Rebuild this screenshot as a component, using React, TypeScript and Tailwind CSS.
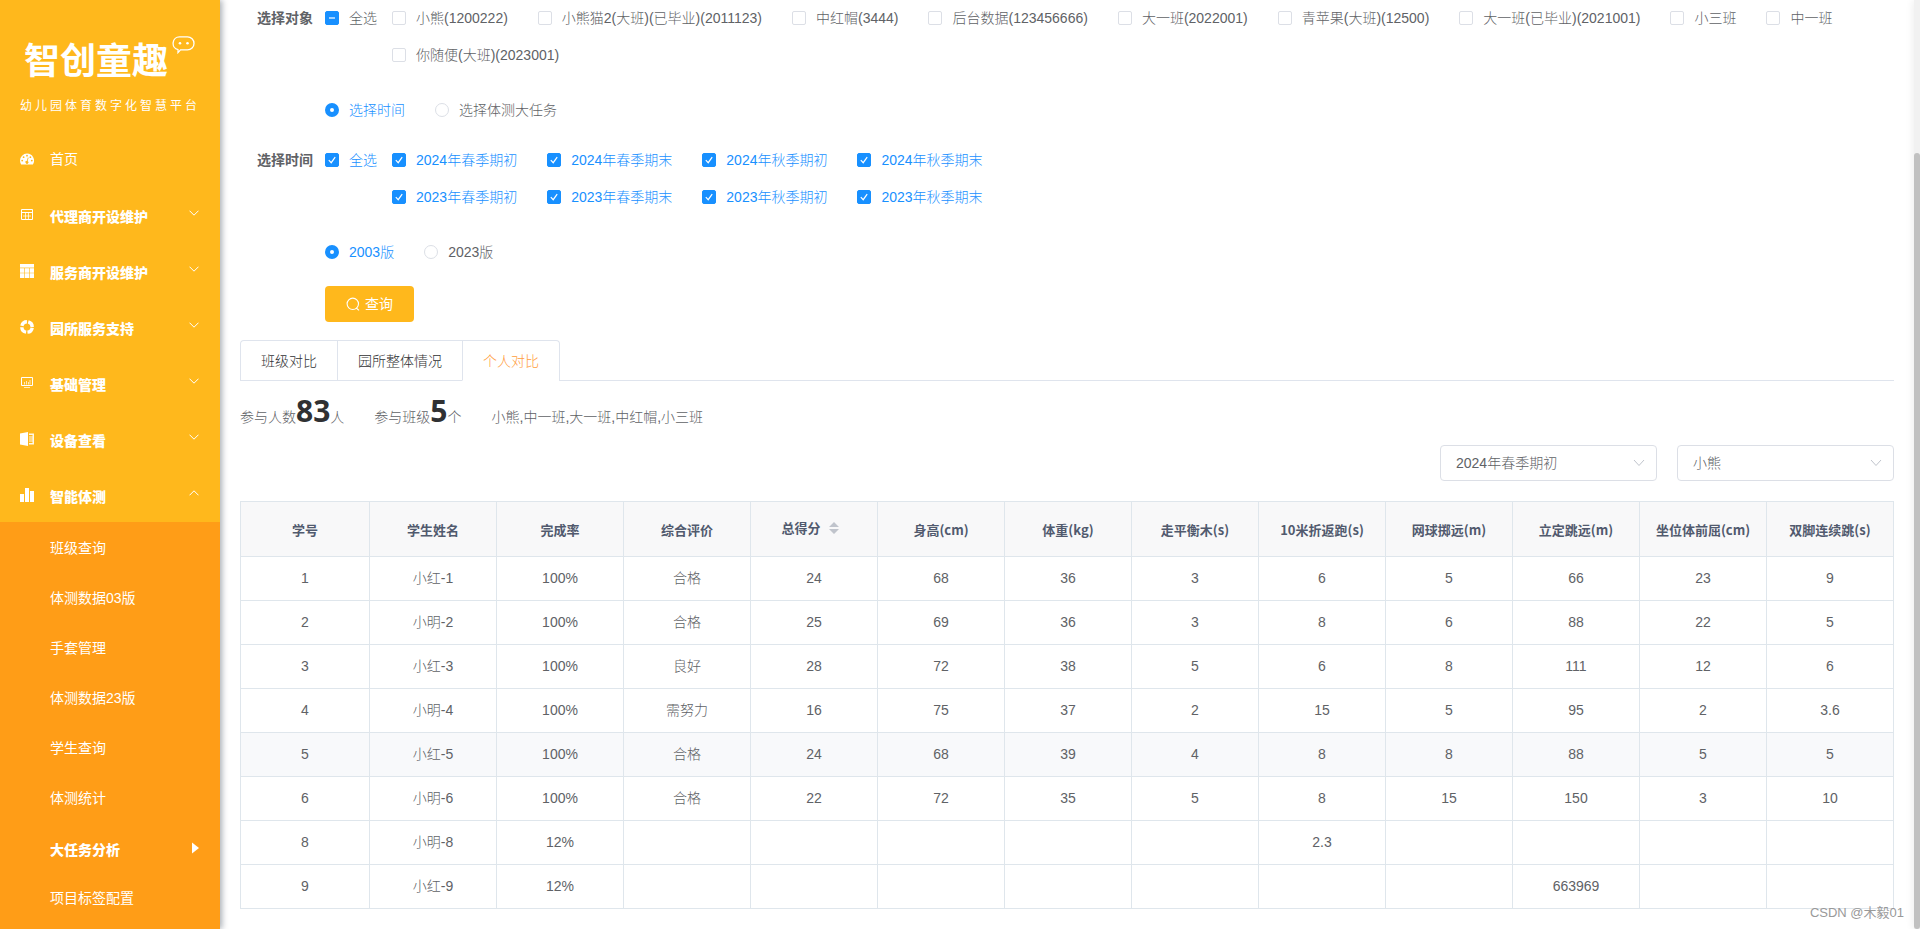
import { useState, type ReactNode } from 'react';
import clsx from 'clsx';

const CLASSES = [
  '小熊(1200222)',
  '小熊猫2(大班)(已毕业)(2011123)',
  '中红帽(3444)',
  '后台数据(123456666)',
  '大一班(2022001)',
  '青苹果(大班)(12500)',
  '大一班(已毕业)(2021001)',
  '小三班',
  '中一班',
  '你随便(大班)(2023001)',
];

const TERMS = [
  '2024年春季期初',
  '2024年春季期末',
  '2024年秋季期初',
  '2024年秋季期末',
  '2023年春季期初',
  '2023年春季期末',
  '2023年秋季期初',
  '2023年秋季期末',
];

const TABS = ['班级对比', '园所整体情况', '个人对比'];

const COLUMNS = [
  '学号',
  '学生姓名',
  '完成率',
  '综合评价',
  '总得分',
  '身高(cm)',
  '体重(kg)',
  '走平衡木(s)',
  '10米折返跑(s)',
  '网球掷远(m)',
  '立定跳远(m)',
  '坐位体前屈(cm)',
  '双脚连续跳(s)',
];

const ROWS = [
  ['1', '小红-1', '100%', '合格', '24', '68', '36', '3', '6', '5', '66', '23', '9'],
  ['2', '小明-2', '100%', '合格', '25', '69', '36', '3', '8', '6', '88', '22', '5'],
  ['3', '小红-3', '100%', '良好', '28', '72', '38', '5', '6', '8', '111', '12', '6'],
  ['4', '小明-4', '100%', '需努力', '16', '75', '37', '2', '15', '5', '95', '2', '3.6'],
  ['5', '小红-5', '100%', '合格', '24', '68', '39', '4', '8', '8', '88', '5', '5'],
  ['6', '小明-6', '100%', '合格', '22', '72', '35', '5', '8', '15', '150', '3', '10'],
  ['8', '小明-8', '12%', '', '', '', '', '', '2.3', '', '', '', ''],
  ['9', '小红-9', '12%', '', '', '', '', '', '', '', '663969', '', ''],
];

const SUB_MENU = ['班级查询', '体测数据03版', '手套管理', '体测数据23版', '学生查询', '体测统计'];

function MenuIcon({ children }: { children: ReactNode }) {
  return (
    <svg viewBox="0 0 14 14" className="mr-4 size-3.5 shrink-0" fill="currentColor">
      {children}
    </svg>
  );
}

const ICONS: Record<string, ReactNode> = {
  dashboard: (
    <>
      <path d="M7 1.6a7 7 0 0 0-7 7c0 1.4.4 2.7 1.1 3.8.1.2.3.2.5.2h10.8c.2 0 .4 0 .5-.2A7 7 0 0 0 7 1.6z" />
      <g fill="#ffb81c">
        <circle cx="2.2" cy="8.6" r="0.9" />
        <circle cx="3.6" cy="5.2" r="0.9" />
        <circle cx="7" cy="3.7" r="0.9" />
        <circle cx="10.4" cy="5.2" r="0.9" />
        <circle cx="11.8" cy="8.6" r="0.9" />
        <path d="M8.6 5.7l-.9 3.3a1.5 1.5 0 1 1-.8-.2l.9-3.3z" />
      </g>
    </>
  ),
  table: (
    <g fill="none" stroke="currentColor">
      <path d="M1.5 1.5h11v10h-11z" />
      <path d="M1.5 4.5h11" />
      <path d="M3 8h8M5.5 5v6M8.5 5v6" strokeOpacity="0.75" />
    </g>
  ),
  grid: (
    <>
      <path d="M0 0h14v3.6H0z" />
      <path d="M0 4.2h4.4v4.5H0zM5 4.2h4v4.5H5zM9.6 4.2H14v4.5H9.6zM0 9.3h4.4V14H0zM5 9.3h4V14H5zM9.6 9.3H14V14H9.6z" />
    </>
  ),
  support: (
    <circle cx="7" cy="7" r="5.2" fill="none" stroke="currentColor" strokeWidth="3.4" strokeDasharray="6.77 1.4" strokeDashoffset="-0.7" />
  ),
  monitor: (
    <g fill="none" stroke="currentColor">
      <path d="M1.5 1.5h11v8h-11z" />
      <path d="M4.5 6v2.5M6.5 5v3.5M8.5 6v2.5M10 4v4.5M4 11.5h6" strokeOpacity="0.7" />
    </g>
  ),
  book: (
    <>
      <path d="M0 1.5 8 0v14l-8-1.5z" />
      <path d="M9 1.5h5v11H9V11h3.5V9.5H9v-1h3.5v-1H9v-1h3.5v-1H9v-1h3.5V3H9z" opacity="0.9" />
    </>
  ),
  chart: <path d="M0 6h4v8H0zM5 0h4v14H5zM10 3h4v11h-4z" />,
};

const MENU = [
  { label: '代理商开设维护', icon: 'table' },
  { label: '服务商开设维护', icon: 'grid' },
  { label: '园所服务支持', icon: 'support' },
  { label: '基础管理', icon: 'monitor' },
  { label: '设备查看', icon: 'book' },
  { label: '智能体测', icon: 'chart', open: true },
];

function Chevron({ up }: { up?: boolean }) {
  return (
    <svg viewBox="0 0 10 6" className="mb-1 h-1.5 w-2.5" fill="none" stroke="currentColor">
      <path d={up ? 'M.5 5.3 5 .8l4.5 4.5' : 'M.5.7 5 5.2 9.5.7'} />
    </svg>
  );
}

function Sidebar() {
  return (
    <aside className="z-10 w-[220px] shrink-0 bg-[#ff9d17] text-sm text-white shadow-[2px_0_6px_rgba(0,21,41,0.35)]">
      <div className="bg-[#ffb81c]">
        <div className="h-[130px] px-5 pt-9">
          <div className="flex items-start gap-1 pl-1">
            <h1 className="pt-1 text-4xl leading-[44px] font-bold">智创童趣</h1>
            <svg viewBox="0 0 23 18" className="h-[18px] w-[23px] shrink-0" fill="none" stroke="currentColor" strokeWidth="1.3">
              <path d="M7.5.9h8a6.5 6.5 0 0 1 0 13h-7L6 16.6v-2.9A6.5 6.5 0 0 1 7.500.9z" />
              <circle cx="8" cy="7.3" r="1.3" fill="currentColor" stroke="none" />
              <circle cx="15.5" cy="7.3" r="1.3" fill="currentColor" stroke="none" />
            </svg>
          </div>
          <p className="mt-3 text-xs leading-5 tracking-[3px] whitespace-nowrap">幼儿园体育数字化智慧平台</p>
        </div>
        <nav>
          <a href="#home" className="flex h-14 items-center px-5 pt-0.5">
            <MenuIcon>{ICONS.dashboard}</MenuIcon>
            首页
          </a>
          {MENU.map((item) => (
            <button key={item.label} type="button" className="flex h-14 w-full items-center pt-0.5 pr-[21px] pl-5 font-black">
              <MenuIcon>{ICONS[item.icon]}</MenuIcon>
              <span className="flex-1 pt-1 text-left">{item.label}</span>
              <Chevron up={item.open} />
            </button>
          ))}
        </nav>
      </div>
      <nav>
        {SUB_MENU.map((label) => (
          <a key={label} href="#sub" className="flex h-[50px] items-center pt-0.5 pl-[50px]">
            {label}
          </a>
        ))}
        <button type="button" className="flex h-[50px] w-full items-center justify-between pt-0.5 pr-[21px] pl-[50px] font-black">
          <span className="pt-1">大任务分析</span>
          <svg viewBox="0 0 8 12" className="h-3 w-2" fill="currentColor">
            <path d="M1 .5v11L8 6z" />
          </svg>
        </button>
        <a href="#tags" className="flex h-[50px] items-center pt-0.5 pl-[50px]">
          项目标签配置
        </a>
      </nav>
    </aside>
  );
}

interface CheckProps {
  label: string;
  defaultChecked?: boolean;
  partial?: boolean;
}

function Check({ label, defaultChecked = false, partial = false }: CheckProps) {
  const [checked, setChecked] = useState(defaultChecked);
  const filled = checked || partial;

  return (
    <label className={clsx('flex h-9 items-center gap-2.5', checked ? 'text-[#1890ff]' : 'text-[#606266]')}>
      <span className="relative flex size-3.5">
        <input
          type="checkbox"
          checked={checked}
          onChange={(e) => setChecked(e.target.checked)}
          className={clsx(
            'size-3.5 appearance-none rounded-xs border',
            filled ? 'border-[#1890ff] bg-[#1890ff]' : 'border-[#dcdfe6] bg-white',
          )}
        />
        {filled && (
          <svg viewBox="0 0 14 14" className="pointer-events-none absolute inset-0" fill="none" stroke="#fff" strokeWidth="1.2">
            <path d={checked ? 'M3.8 7.2 6.2 9.7 10.2 4.2' : 'M4 7h6'} />
          </svg>
        )}
      </span>
      {label}
    </label>
  );
}

function RadioPair({ name, options }: { name: string; options: string[] }) {
  const [value, setValue] = useState(options[0]);

  return (
    <div className="flex h-9 items-center gap-[30px] pl-[85px]">
      {options.map((option) => (
        <label key={option} className={clsx('flex items-center gap-2.5', value === option ? 'text-[#1890ff]' : 'text-[#606266]')}>
          <input
            type="radio"
            name={name}
            checked={value === option}
            onChange={() => setValue(option)}
            className="size-3.5 appearance-none rounded-full border border-[#dcdfe6] bg-white checked:border-[5px] checked:border-[#1890ff]"
          />
          {option}
        </label>
      ))}
    </div>
  );
}

function FilterRow({ label, all, children }: { label: string; all: ReactNode; children: ReactNode }) {
  return (
    <div className="mb-[19px] flex items-start">
      <span className="w-[85px] shrink-0 pr-3 text-right leading-9 font-bold text-[#606266]">{label}</span>
      <div className="mr-[15px] shrink-0">{all}</div>
      {children}
    </div>
  );
}

function SelectBox({ label, options }: { label: string; options: string[] }) {
  return (
    <div className="relative w-[217px]">
      <select
        aria-label={label}
        className="h-9 w-full appearance-none rounded border border-[#dcdfe6] bg-white px-[15px] text-[#606266]"
      >
        {options.map((option) => (
          <option key={option}>{option}</option>
        ))}
      </select>
      <svg viewBox="0 0 12 8" className="pointer-events-none absolute top-3.5 right-3 h-2 w-3" fill="none" stroke="#c0c4cc">
        <path d="M1 1l5 5.5L11 1" />
      </svg>
    </div>
  );
}

function ScoreTable() {
  return (
    <table className="w-full table-fixed border-separate border-spacing-0 border-t border-l border-[#dfe6ec] text-center text-[#606266]">
      <thead>
        <tr className="h-[55px] bg-[#f8f8f9] text-[13px] text-[#515a6e]">
          {COLUMNS.map((column, i) => (
            <th
              key={column}
              className={clsx(
                'border-r border-b border-[#dfe6ec] p-0 pt-0.5 font-["Noto_Sans_CJK_SC",sans-serif] font-bold',
                i === 0 && 'w-[129px]',
              )}
            >
              {column === '总得分' ? (
                <button type="button" className="inline-flex items-center gap-2 pr-2 pb-1">
                  {column}
                  <svg viewBox="0 0 10 12" className="h-3 w-2.5" fill="#c0c4cc">
                    <path d="M5 0l5 5H0zM5 12l5-5H0z" />
                  </svg>
                </button>
              ) : (
                column
              )}
            </th>
          ))}
        </tr>
      </thead>
      <tbody>
        {ROWS.map((row) => (
          <tr key={row[0]} className={clsx('h-11', row[0] === '5' && 'bg-[#f8f9fb]')}>
            {row.map((cell, i) => (
              <td key={i} className="border-r border-b border-[#dfe6ec] p-0 pb-0.5">
                {cell}
              </td>
            ))}
          </tr>
        ))}
      </tbody>
    </table>
  );
}

function Count({ value }: { value: number }) {
  return <b className='font-["Noto_Sans",sans-serif] text-3xl leading-9 font-bold text-[#303133]'>{value}</b>;
}

export default function App() {
  const [tab, setTab] = useState('个人对比');

  return (
    <div className='flex min-h-screen bg-white font-["Liberation_Sans","Noto_Sans_CJK_SC",sans-serif] text-sm text-[#606266]'>
      <Sidebar />

      <main className="relative min-w-0 flex-1 px-5 pb-5 font-light">
        {/* 筛选条件 */}
        <form onSubmit={(e) => e.preventDefault()}>
          <FilterRow label="选择对象" all={<Check label="全选" partial />}>
            <div className="flex flex-1 flex-wrap gap-x-[30px] gap-y-px">
              {CLASSES.map((name) => (
                <Check key={name} label={name} />
              ))}
            </div>
          </FilterRow>

          <div className="mb-3.5">
            <RadioPair name="mode" options={['选择时间', '选择体测大任务']} />
          </div>

          <FilterRow label="选择时间" all={<Check label="全选" defaultChecked />}>
            <div className="grid grid-cols-4 gap-x-[30px] gap-y-px">
              {TERMS.map((term) => (
                <Check key={term} label={term} defaultChecked />
              ))}
            </div>
          </FilterRow>

          <RadioPair name="version" options={['2003版', '2023版']} />

          <div className="mt-4 pl-[85px]">
            <button type="submit" className="flex h-9 items-center gap-[5px] rounded bg-[#ffb81c] px-[21px] font-normal text-white">
              <svg viewBox="0 0 14 14" className="size-3.5" fill="none" stroke="currentColor" strokeWidth="1.1">
                <circle cx="6.8" cy="6.8" r="5.7" />
                <path d="M10.2 11l2.8 2.3" />
              </svg>
              查询
            </button>
          </div>
        </form>

        {/* 标签页 */}
        <div className="mt-4.5 flex border-b border-[#dfe4ed]">
          <div role="tablist" className="-mb-px flex rounded-t border border-b-0 border-[#dfe4ed]">
            {TABS.map((name, i) => (
              <button
                key={name}
                type="button"
                role="tab"
                aria-selected={tab === name}
                onClick={() => setTab(name)}
                className={clsx(
                  'h-10 border-b px-5',
                  i > 0 && 'border-l border-l-[#dfe4ed]',
                  tab === name ? 'border-b-white text-[#ff9d3c]' : 'border-b-[#dfe4ed] text-[#303133]',
                )}
              >
                {name}
              </button>
            ))}
          </div>
        </div>

        {/* 参与情况 */}
        <div className="mt-3 mb-2 flex h-[44px] items-baseline gap-[30px] leading-9">
          <p>
            参与人数
            <Count value={83} />人
          </p>
          <p>
            参与班级
            <Count value={5} />个
          </p>
          <p>小熊,中一班,大一班,中红帽,小三班</p>
        </div>

        <div className="mb-5 flex justify-end gap-5">
          <SelectBox label="学期" options={TERMS} />
          <SelectBox label="班级" options={['小熊', '中一班', '大一班', '中红帽', '小三班']} />
        </div>

        <ScoreTable />

        <span className="absolute right-2.5 bottom-1.5 text-[13px] leading-5 font-normal text-[#999]">CSDN @木毅01</span>
      </main>

      {/* 滚动条 */}
      <div className="flex w-1.5 shrink-0 bg-[#f1f1f1] pt-[153px] shadow-[0_0_8px_rgba(0,0,0,0.1)]">
        <div className="flex-1 rounded-full bg-[#c1c1c1]" />
      </div>
    </div>
  );
}
